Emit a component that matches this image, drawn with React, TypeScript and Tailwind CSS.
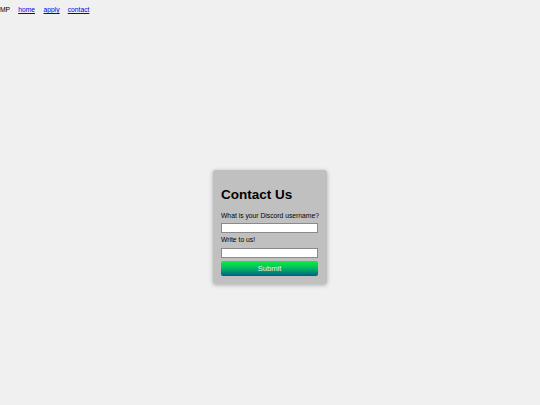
import React from "react";

export default function App() {
  return (
    <div className="min-h-screen w-full bg-[#f0f0f0] text-black" style={{ fontFamily: '"Liberation Sans", Arial, sans-serif' }}>
      <nav className="flex h-[20px] items-start pt-[6px] text-[6.75px] leading-[8px]">
        <span>MP</span>
        <a href="#" className="ml-[8px] text-[#0000ee] underline">home</a>
        <a href="#" className="ml-[8.5px] text-[#0000ee] underline">apply</a>
        <a href="#" className="ml-[8px] text-[#0000ee] underline">contact</a>
      </nav>
      <main className="flex justify-center pt-[150px]">
        <div className="w-[114px] rounded-[3px] bg-[#c0c0c0] px-[8px] pt-[16.6px] pb-[8px] shadow-[0_1px_4px_rgba(0,0,0,0.3)]">
          <h1 className="text-[13.5px] font-bold leading-[16px]">Contact Us</h1>
          <form className="flex flex-col" onSubmit={(e) => e.preventDefault()}>
            <label className="mt-[9.1px] text-[6.75px] leading-[8px]">What is your Discord username?</label>
            <input type="text" className="mt-[3.3px] h-[10px] w-[97px] border border-[#8a8a8a] bg-white outline-none" />
            <label className="mt-[2.7px] text-[6.75px] leading-[8px]">Write to us!</label>
            <input type="text" className="mt-[4.3px] h-[9.7px] w-[97px] border border-[#8a8a8a] bg-white outline-none" />
            <button type="submit" className="mt-[3.8px] h-[14.7px] w-[97px] rounded-[2px] bg-[linear-gradient(to_bottom,#10ec40,#00c858_40%,#005c8c)] text-[7.6px] leading-[14px] text-[#eeeeee]">
              Submit
            </button>
          </form>
        </div>
      </main>
    </div>
  );
}
